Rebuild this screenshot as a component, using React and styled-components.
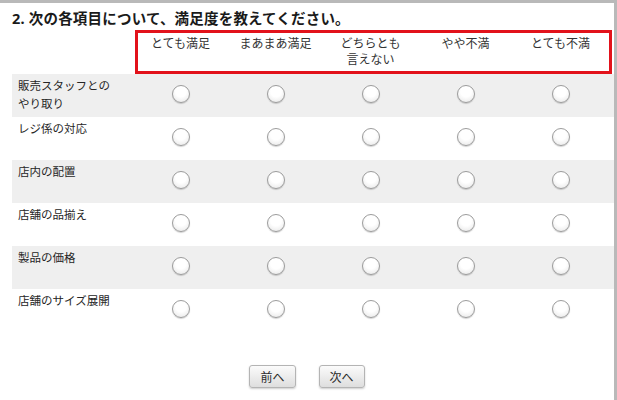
import React from 'react'
import styled, { createGlobalStyle } from 'styled-components';

const GlobalStyle = createGlobalStyle`
    html, body {
        margin: 0;
        padding: 0;
        background: #ffffff;
    }
    body {
        font-family: "Noto Sans", "Noto Sans CJK JP", sans-serif;
    }
`;

const choices = [
    ['とても満足'],
    ['まあまあ満足'],
    ['どちらとも', '言えない'],
    ['やや不満'],
    ['とても不満'],
];

const items = [
    ['販売スタッフとの', 'やり取り'],
    ['レジ係の対応'],
    ['店内の配置'],
    ['店舗の品揃え'],
    ['製品の価格'],
    ['店舗のサイズ展開'],
];

function App() {
  return (
    <>
        <GlobalStyle />
        <Frame>
            <Title>2. 次の各項目について、満足度を教えてください。</Title>

            <HeaderRow>
                <RedFrame />
                {choices.map((lines, i) => (
                    <HeaderCell key={i} col={i + 2}>
                        {lines.map((l, j) => <div key={j}>{l}</div>)}
                    </HeaderCell>
                ))}
            </HeaderRow>

            {items.map((lines, r) => (
                <Row key={r} striped={r % 2 === 0}>
                    <Label>
                        {lines.map((l, j) => <div key={j}>{l}</div>)}
                    </Label>
                    {choices.map((_, c) => (
                        <Cell key={c}>
                            <Radio type="radio" name={'q' + r} aria-label={choices[c].join('')} />
                        </Cell>
                    ))}
                </Row>
            ))}

            <Buttons>
                <NavButton>前へ</NavButton>
                <NavButton>次へ</NavButton>
            </Buttons>
        </Frame>
    </>
  )
}

const Frame = styled.div`
    width: 617px;
    height: 400px;
    box-sizing: border-box;
    border-top: 3px solid #b9b9b9;
    border-right: 3px solid #b9b9b9;
    padding: 6px 0 0 12px;
    overflow: hidden;
`;

const Title = styled.h2`
    margin: 0;
    font-size: 14.5px;
    line-height: 18px;
    font-weight: bold;
    color: #1a1a1a;
    letter-spacing: 0.2px;
`;

const columns = `121px repeat(5, 95px)`;

const HeaderRow = styled.div`
    display: grid;
    grid-template-columns: ${columns};
    height: 44px;
    margin-top: 3px;
`;

const RedFrame = styled.div`
    grid-column: 2 / -1;
    grid-row: 1;
    border: 3px solid #e2121b;
    margin: 0 -4px 0 2px;
`;

const HeaderCell = styled.div`
    grid-column: ${props => props.col};
    grid-row: 1;
    padding-top: 6px;
    text-align: center;
    font-size: 12px;
    line-height: 16px;
    color: #333333;
`;

const Row = styled.div`
    display: grid;
    grid-template-columns: ${columns};
    height: 43px;
    background: ${props => props.striped ? '#efefef' : '#ffffff'};
`;

const Label = styled.div`
    padding: 3px 0 0 6px;
    font-size: 11.5px;
    line-height: 18px;
    color: #262626;
`;

const Cell = styled.div`
    display: flex;
    align-items: center;
    justify-content: center;
    padding-bottom: 3px;
`;

const Radio = styled.input`
    appearance: none;
    -webkit-appearance: none;
    margin: 0;
    width: 18px;
    height: 18px;
    border-radius: 50%;
    border: 1px solid #9c9c9c;
    background: radial-gradient(circle at 50% 35%, #ffffff 40%, #e4e4e4 100%);
    box-shadow: 0 1px 1px rgba(0,0,0,0.18);
    box-sizing: border-box;
`;

const Buttons = styled.div`
    display: flex;
    justify-content: center;
    gap: 23px;
    margin-top: 33px;
    padding-right: 12px;
`;

const NavButton = styled.button`
    height: 23px;
    padding: 0 10px;
    font-family: "Noto Sans CJK JP", sans-serif;
    font-size: 12px;
    color: #2b2b2b;
    border: 1px solid #b4b4b4;
    border-radius: 3px;
    background: linear-gradient(#fbfbfb, #dedede);
    box-shadow: 0 1px 2px rgba(0,0,0,0.2);
    line-height: 20px;
`;

export default App;
